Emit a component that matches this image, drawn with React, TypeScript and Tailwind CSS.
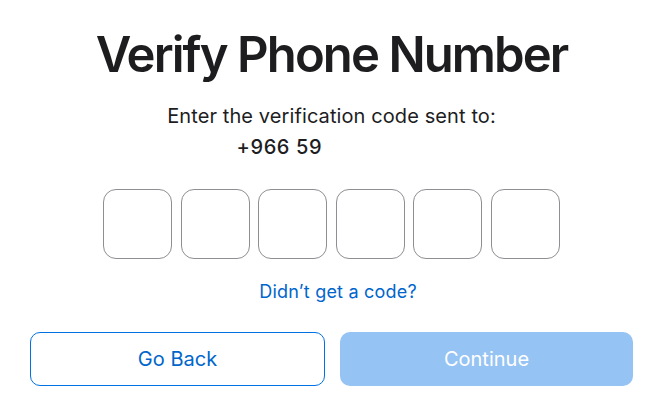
export default function App() {
  return (
    <div className="min-h-screen w-full bg-white font-['Inter',sans-serif] text-[#1d1d1f]">
      <div className="w-[663px]">
        <div className="flex flex-col items-center pt-[25px]">
          <h1 className="text-[49px] font-semibold leading-[60px] tracking-[-1.9px]">
            Verify Phone Number
          </h1>
          <p className="mt-[19px] text-[20px] leading-[24px] tracking-[0.1px]">
            Enter the verification code sent to:
          </p>
          <div className="mt-[7px] w-[328px] pl-[69px] text-[20px] font-medium leading-[24px] tracking-[0.6px]">
            +966 59
          </div>

          <div className="mt-[30px] flex gap-[8.6px]">
            {[0, 1, 2, 3, 4, 5].map((i) => (
              <input
                key={i}
                type="text"
                maxLength={1}
                className="h-[70px] w-[69px] rounded-[13px] border border-[#8e8e93] bg-white text-center text-[28px] outline-none"
              />
            ))}
          </div>

          <a href="#" className="ml-[13px] mt-[22px] text-[18px] leading-[22px] tracking-[0.2px] text-[#0066cc]">
            Didn’t get a code?
          </a>
        </div>

        <div className="mt-[29px] flex gap-[15px] px-[30px]">
          <button className="h-[54px] flex-1 rounded-[10px] border border-[#0071e3] bg-white text-[20px] text-[#0066cc]">
            Go Back
          </button>
          <button className="h-[54px] flex-1 rounded-[10px] bg-[#95c3f3] text-[20px] text-white">
            Continue
          </button>
        </div>
      </div>
    </div>
  );
}
